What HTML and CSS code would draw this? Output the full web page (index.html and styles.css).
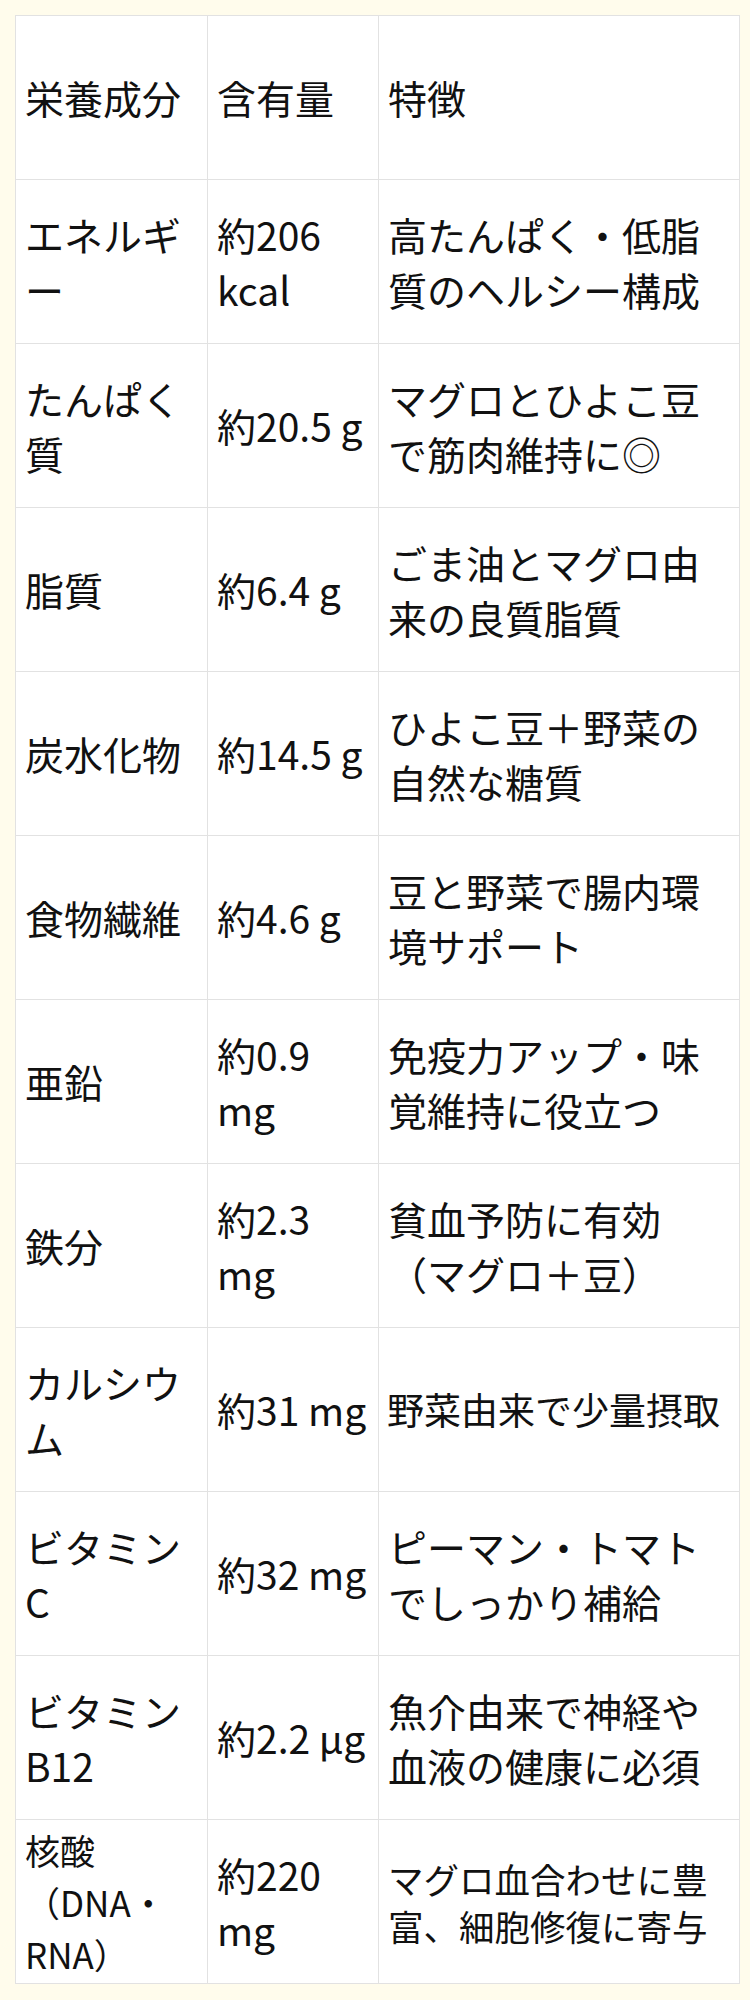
FILE: index.html
```html
<!DOCTYPE html>
<html lang="ja">
<head>
<meta charset="utf-8">
<title>栄養成分</title>
<link rel="stylesheet" href="styles.css">
</head>
<body>
<table class="nutri">
  <colgroup>
    <col class="c1">
    <col class="c2">
    <col class="c3">
  </colgroup>
  <thead>
    <tr><th>栄養成分</th><th>含有量</th><th>特徴</th></tr>
  </thead>
  <tbody>
    <tr><td>エネルギー</td><td>約206 kcal</td><td>高たんぱく・低脂質のヘルシー構成</td></tr>
    <tr><td>たんぱく質</td><td>約20.5 g</td><td>マグロとひよこ豆で筋肉維持に◎</td></tr>
    <tr><td>脂質</td><td>約6.4 g</td><td>ごま油とマグロ由来の良質脂質</td></tr>
    <tr><td>炭水化物</td><td>約14.5 g</td><td>ひよこ豆＋野菜の自然な糖質</td></tr>
    <tr><td>食物繊維</td><td>約4.6 g</td><td>豆と野菜で腸内環境サポート</td></tr>
    <tr><td>亜鉛</td><td>約0.9 mg</td><td>免疫力アップ・味覚維持に役立つ</td></tr>
    <tr><td>鉄分</td><td>約2.3 mg</td><td>貧血予防に有効（マグロ＋豆）</td></tr>
    <tr><td>カルシウム</td><td>約31 mg</td><td class="fit">野菜由来で少量摂取</td></tr>
    <tr><td>ビタミンC</td><td>約32 mg</td><td>ピーマン・トマトでしっかり補給</td></tr>
    <tr><td>ビタミンB12</td><td>約2.2 μg</td><td>魚介由来で神経や血液の健康に必須</td></tr>
    <tr><td class="small">核酸（DNA・RNA）</td><td>約220 mg</td><td class="small2">マグロ血合わせに豊富、細胞修復に寄与</td></tr>
  </tbody>
</table>
</body>
</html>
```

FILE: styles.css
```css
html, body {
  margin: 0;
  padding: 0;
}
body {
  background: #fffcec;
  padding: 15px 11px 16px 15px;
  font-family: "Noto Sans CJK JP", "Noto Sans", sans-serif;
  color: #111;
}
.nutri {
  border-collapse: collapse;
  table-layout: fixed;
  width: 724px;
  background: #fff;
}
.c1 { width: 192px; }
.c2 { width: 171px; }
.c3 { width: 361px; }
.nutri tr {
  height: 164px;
}
.nutri th,
.nutri td {
  border: 1px solid #e2e2e2;
  padding: 0 6px 0 9px;
  font-size: 39px;
  line-height: 55px;
  font-weight: normal;
  text-align: left;
  vertical-align: middle;
}
.nutri td.fit {
  font-size: 37px;
  padding-left: 8px;
  padding-right: 0;
}
.nutri td.small {
  font-size: 35px;
  line-height: 52px;
}
.nutri td.small2 {
  font-size: 35.5px;
  line-height: 47px;
}
```
